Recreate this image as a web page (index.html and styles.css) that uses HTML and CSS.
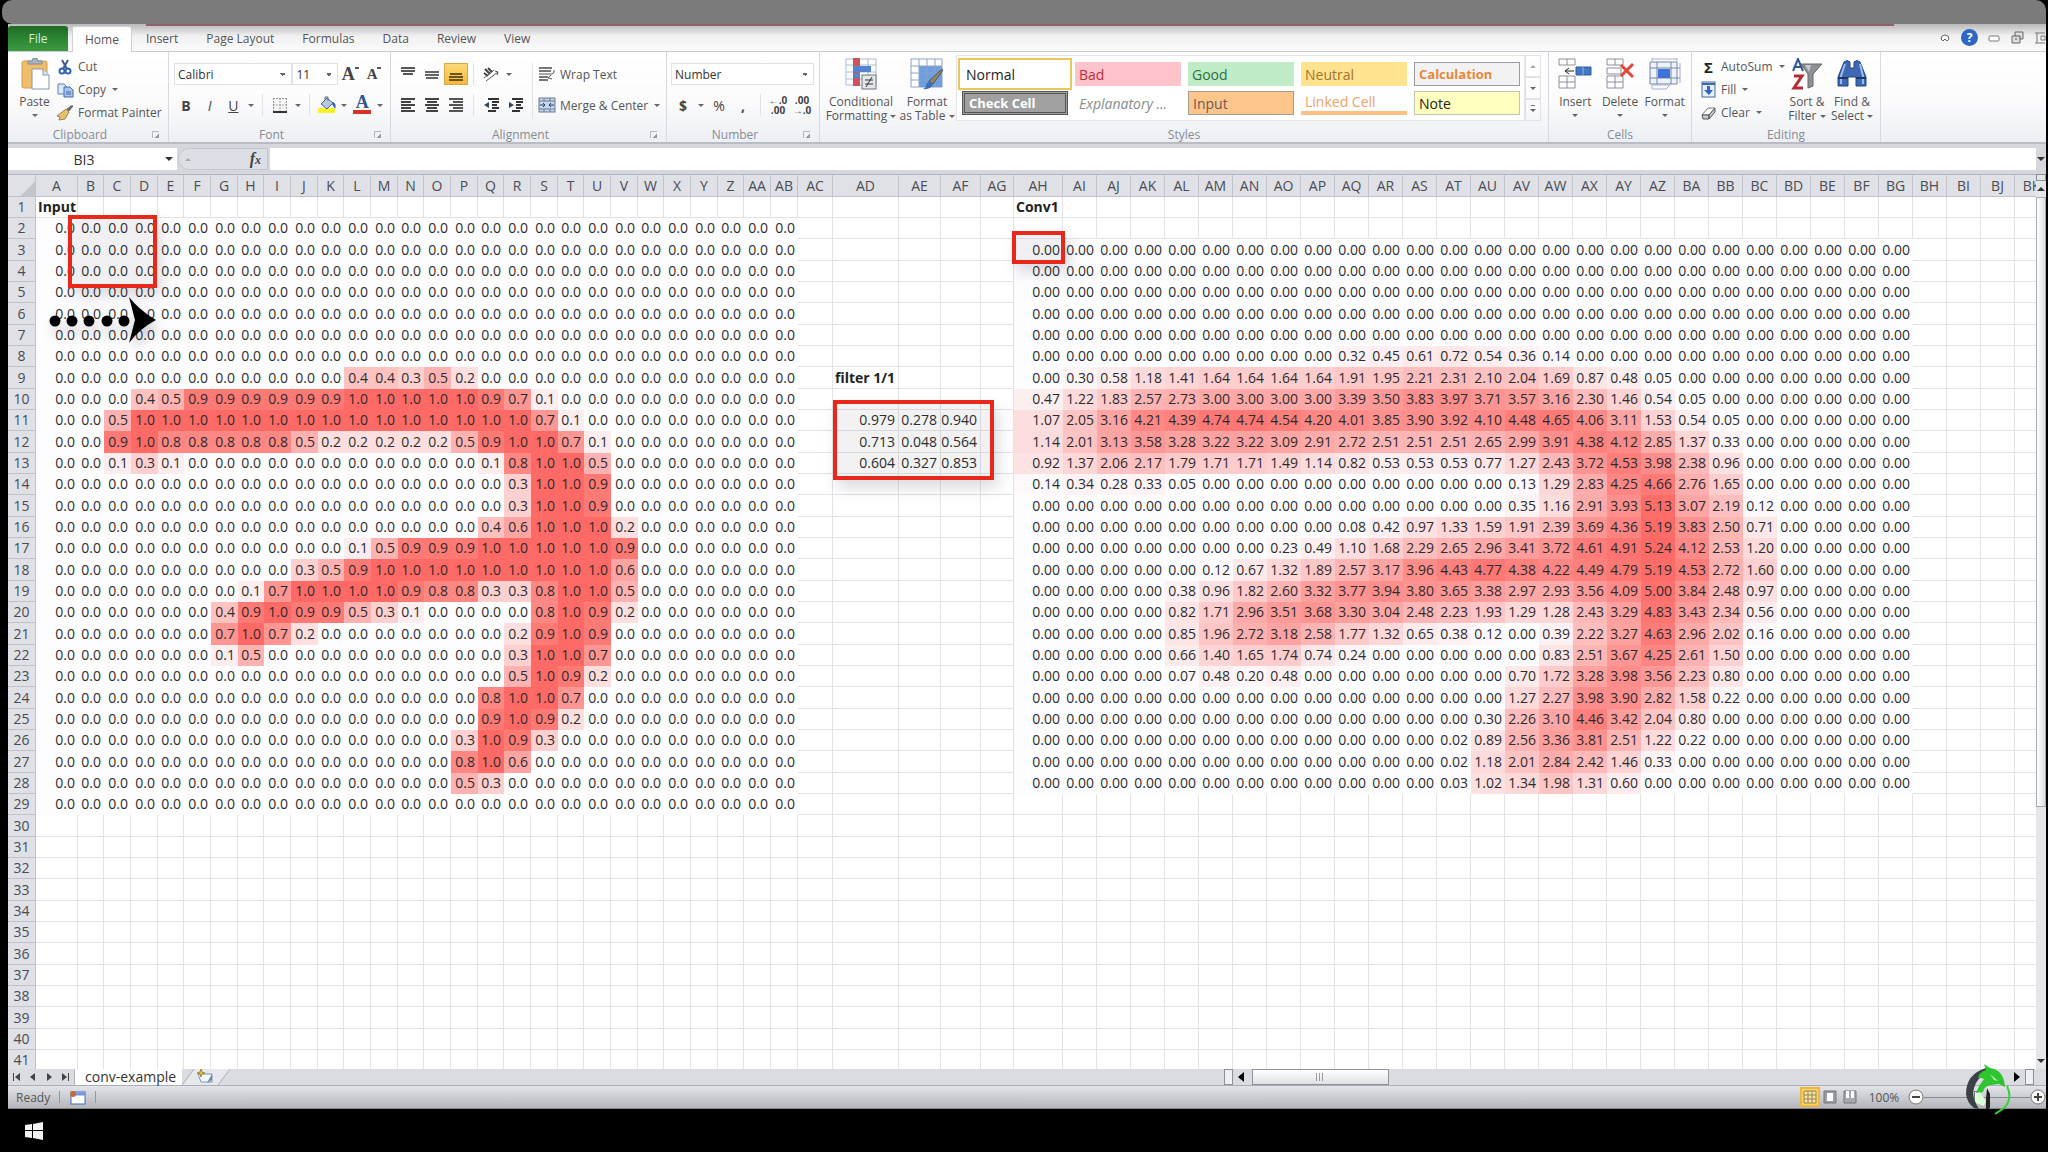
FILE: index.html
```html
<!DOCTYPE html>
<html lang="en">

<head>
    <meta charset="UTF-8">
    <meta name="viewport" content="width=device-width, initial-scale=1.0">
    <title>conv-example</title>
    <link rel="stylesheet" href="styles.css">
</head>

<body>

    <div class="title-bar"></div>

    <main class="window">

        <!-- Ribbon tabs -->
        <nav class="tabs">
            <button class="file-tab">File</button>
            <a href="#" class="tab active">Home</a>
            <a href="#" class="tab">Insert</a>
            <a href="#" class="tab">Page Layout</a>
            <a href="#" class="tab">Formulas</a>
            <a href="#" class="tab">Data</a>
            <a href="#" class="tab">Review</a>
            <a href="#" class="tab">View</a>
            <div class="window-buttons">
                <button aria-label="Minimize ribbon"><svg width="12" height="12" viewBox="0 0 12 12"><path d="M2 7a4 4 0 0 1 8 0L8 9 6 7 4 9z" fill="#fff" stroke="#666"/></svg></button>
                <button class="help" aria-label="Help">?</button>
                <button aria-label="Minimize"><svg width="12" height="12" viewBox="0 0 12 12"><rect x="1" y="4" width="10" height="5" rx="1" fill="#fff" stroke="#777"/></svg></button>
                <button aria-label="Restore"><svg width="14" height="14" viewBox="0 0 14 14"><path d="M5 1h8v7h-3v4H2V5h3z" fill="#ddd" stroke="#666"/><path d="M5 5h5v3M5 8h2" fill="none" stroke="#555"/></svg></button>
                <button aria-label="Close"><svg width="12" height="12" viewBox="0 0 12 12"><path d="M1 1h10M1 11h10M3 1v10M7 4h4v4H7z" fill="none" stroke="#777"/></svg></button>
            </div>
        </nav>

        <!-- Ribbon -->
        <section class="ribbon">
            <div class="group clipboard">
                <div class="tools">
                    <button class="big paste">
                        <svg width="32" height="32" viewBox="0 0 32 32"><rect x="3" y="3" width="25" height="27" rx="2" fill="#efbe6c" stroke="#d29b45"/><path d="M9 6V3h4a3 3 0 0 1 6 0h4v3z" fill="#aab4be" stroke="#7e8a96"/><path d="M13 11h11l6 6v14H13z" fill="#fff" stroke="#8a97a8"/><path d="M24 11v6h6" fill="#dde6f0" stroke="#8a97a8"/></svg>
                        <span>Paste</span><i class="caret"></i>
                    </button>
                    <div class="stack">
                        <button class="small"><svg width="17" height="16" viewBox="0 0 17 16"><path d="M5 1l5 9M11 1L6 10" stroke="#445a80" stroke-width="2" fill="none"/><circle cx="5" cy="12" r="2.5" fill="none" stroke="#3465b0" stroke-width="2"/><circle cx="11" cy="12" r="2.5" fill="none" stroke="#3465b0" stroke-width="2"/></svg>Cut</button>
                        <button class="small"><svg width="17" height="16" viewBox="0 0 17 16"><path d="M1 2h6l3 3v7H1z" fill="#dbe8f8" stroke="#5b7fb5"/><path d="M7 5h6l3 3v7H7z" fill="#a9c5ec" stroke="#3e69ab"/><path d="M9 10h5M9 12h5" stroke="#3e69ab"/></svg>Copy<i class="caret"></i></button>
                        <button class="small"><svg width="17" height="16" viewBox="0 0 17 16"><path d="M16 1l-5 6-2-2 5-4z" fill="#777" stroke="#555"/><path d="M9 4l3 3-4 7-6 1 1-3-3-1z" fill="#e5c174" stroke="#a5833c"/></svg>Format Painter</button>
                    </div>
                </div>
                <div class="group-label"><span>Clipboard</span><i class="launcher"></i></div>
            </div>

            <div class="group font">
                <div class="tools rows">
                    <div class="row">
                        <select class="font-name" aria-label="Font"><option>Calibri</option></select>
                        <select class="font-size" aria-label="Font size"><option>11</option></select>
                        <button class="tool grow-font" aria-label="Grow font">A<sup></sup></button>
                        <button class="tool shrink-font" aria-label="Shrink font">A<sup></sup></button>
                    </div>
                    <div class="row">
                        <button class="tool"><b>B</b></button>
                        <button class="tool"><em>I</em></button>
                        <button class="tool"><u>U</u></button>
                        <button class="drop" aria-label="Underline style"><i class="caret"></i></button>
                        <i class="sep"></i>
                        <button class="tool" aria-label="Borders"><svg width="16" height="16" viewBox="0 0 16 16"><path d="M1.5 1v13M14.500 1v13M8 1v13M1 1.500h14M1 8h14" fill="none" stroke="#999" stroke-dasharray="2 1"/><path d="M1 15h14" stroke="#333" stroke-width="2"/></svg></button>
                        <button class="drop" aria-label="Border style"><i class="caret"></i></button>
                        <i class="sep"></i>
                        <button class="tool" aria-label="Fill color"><svg width="20" height="18" viewBox="0 0 20 18"><rect x="1" y="12" width="17" height="5" fill="#f8f32c"/><path d="M4 8l6-6 6 5-6 6z" fill="#b9c7de" stroke="#4b648d"/><path d="M8 4V1h3v4" fill="none" stroke="#58688a"/><path d="M16 6q4 2 2 7l-3-5z" fill="#2f62b8"/></svg></button>
                        <button class="drop" aria-label="Fill colors"><i class="caret"></i></button>
                        <button class="tool font-color" aria-label="Font color">A</button>
                        <button class="drop" aria-label="Font colors"><i class="caret"></i></button>
                    </div>
                </div>
                <div class="group-label"><span>Font</span><i class="launcher"></i></div>
            </div>

            <div class="group alignment">
                <div class="tools">
                    <div class="rows">
                        <div class="row">
                            <button class="tool" aria-label="Top align"><svg width="16" height="16" viewBox="0 0 16 16"><path d="M1 2h14M1 5h14M3 8h10" stroke="#555" stroke-width="2"/></svg></button>
                            <button class="tool" aria-label="Middle align"><svg width="16" height="16" viewBox="0 0 16 16"><path d="M1 6h14M1 9h14M2 12h12" stroke="#666" stroke-width="2"/></svg></button>
                            <button class="tool pressed" aria-label="Bottom align"><svg width="16" height="16" viewBox="0 0 16 16"><path d="M2 8h12M1 11h14M1 14h14" stroke="#6b5318" stroke-width="2"/></svg></button>
                            <i class="sep"></i>
                            <button class="tool" aria-label="Orientation"><svg width="16" height="16" viewBox="0 0 16 16"><path d="M1 12L11 4M3 15L15 6M12 5l3 1-1 3" fill="none" stroke="#555"/><path d="M2 3l5 5M1 7l4 3M5 2l4 4" stroke="#444" stroke-width="2"/></svg></button>
                            <button class="drop" aria-label="Orientation options"><i class="caret"></i></button>
                        </div>
                        <div class="row">
                            <button class="tool" aria-label="Align left"><svg width="16" height="16" viewBox="0 0 16 16"><path d="M1 2h14M1 5h10M1 8h14M1 11h10M1 14h14" stroke="#444" stroke-width="2"/></svg></button>
                            <button class="tool" aria-label="Center"><svg width="16" height="16" viewBox="0 0 16 16"><path d="M1 2h14M3 5h10M1 8h14M3 11h10M2 14h12" stroke="#444" stroke-width="2"/></svg></button>
                            <button class="tool" aria-label="Align right"><svg width="16" height="16" viewBox="0 0 16 16"><path d="M1 2h14M5 5h10M1 8h14M5 11h10M1 14h14" stroke="#555" stroke-width="2"/></svg></button>
                            <i class="sep"></i>
                            <button class="tool" aria-label="Decrease indent"><svg width="17" height="16" viewBox="0 0 17 16"><path d="M5 2h11M9 5h7M9 8h5M9 11h7M5 14h8" stroke="#333" stroke-width="2"/><path d="M6 5v6L1 8z" fill="#345"/></svg></button>
                            <button class="tool" aria-label="Increase indent"><svg width="17" height="16" viewBox="0 0 17 16"><path d="M5 2h11M9 5h7M9 8h5M9 11h7M5 14h8" stroke="#333" stroke-width="2"/><path d="M2 5v6l5-3z" fill="#345"/></svg></button>
                        </div>
                    </div>
                    <i class="sep tall"></i>
                    <div class="rows">
                        <button class="small"><svg width="18" height="16" viewBox="0 0 18 16"><path d="M1 2h13M1 5h12M1 11h9M1 14h9" stroke="#777" stroke-width="2"/><path d="M1 8h13q3-1 2-4M13 9l-3 3 4 1" fill="none" stroke="#555"/></svg>Wrap Text</button>
                        <button class="small"><svg width="18" height="16" viewBox="0 0 18 16"><rect x="1" y="1" width="16" height="14" fill="#c7d5ea" stroke="#6c7b94"/><path d="M1 4h16M1 12h16M6 1v3M12 1v3M6 12v3M12 12v3" stroke="#6c7b94"/><path d="M2 8h4M16 8h-4M5 6l2 2-2 2M13 6l-2 2 2 2" fill="none" stroke="#23406f"/></svg>Merge &amp; Center<i class="caret"></i></button>
                    </div>
                </div>
                <div class="group-label"><span>Alignment</span><i class="launcher"></i></div>
            </div>

            <div class="group number">
                <div class="tools rows">
                    <div class="row"><select class="number-format" aria-label="Number format"><option>Number</option></select></div>
                    <div class="row">
                        <button class="tool"><b>$</b></button>
                        <button class="drop" aria-label="Currencies"><i class="caret"></i></button>
                        <button class="tool">%</button>
                        <button class="tool"><b>,</b></button>
                        <i class="sep"></i>
                        <button class="tool decimals">←.0<br>.00</button>
                        <button class="tool decimals">.00<br>→.0</button>
                    </div>
                </div>
                <div class="group-label"><span>Number</span><i class="launcher"></i></div>
            </div>

            <div class="group styles">
                <div class="tools">
                    <button class="big cond">
                        <svg width="32" height="32" viewBox="0 0 32 32"><path d="M1 1h30v26H1z" fill="#fff" stroke="#a9bbd2"/><path d="M1 7h30M1 14h30M1 21h30M23 1v26" stroke="#a9bbd2"/><path d="M8 0h7v28H8z" fill="#d2525c"/><path d="M8 8h18v6H8z" fill="#5284cf"/><path d="M8 15h7v5H8z" fill="#5284cf"/><rect x="17" y="17" width="14" height="14" fill="#e3e6ea" stroke="#6c7480"/><path d="M20 22h8M20 26h8M27 19l-6 10" stroke="#333"/></svg>
                        <span>Conditional<br>Formatting <i class="caret"></i></span>
                    </button>
                    <button class="big table">
                        <svg width="34" height="32" viewBox="0 0 34 32"><path d="M1 1h31v28H1z" fill="#fff" stroke="#8da3c2"/><path d="M9 8h23v21H9z" fill="#6f9ee0"/><path d="M1 8h31M1 15h31M1 22h31M9 1v28M17 1v28M25 1v28" stroke="#8da3c2"/><path d="M33 12L23 26l-4-3 12-11z" fill="#8a8a6a" stroke="#555"/><path d="M19 23l4 3q-2 6-10 5 4-2 3-5z" fill="#3e6ec0"/></svg>
                        <span>Format<br>as Table <i class="caret"></i></span>
                    </button>
                    <div class="gallery">
                        <button class="style normal">Normal</button>
                        <button class="style bad">Bad</button>
                        <button class="style good">Good</button>
                        <button class="style neutral">Neutral</button>
                        <button class="style calculation">Calculation</button>
                        <button class="style check-cell">Check Cell</button>
                        <button class="style explanatory">Explanatory ...</button>
                        <button class="style input-style">Input</button>
                        <button class="style linked">Linked Cell</button>
                        <button class="style note">Note</button>
                    </div>
                    <div class="gallery-scroll">
                        <button aria-label="Scroll up"><i class="caret up"></i></button>
                        <button aria-label="Scroll down"><i class="caret"></i></button>
                        <button aria-label="More styles"><i class="caret more"></i></button>
                    </div>
                </div>
                <div class="group-label plain"><span>Styles</span></div>
            </div>

            <div class="group cells">
                <div class="tools">
                    <button class="big">
                        <svg width="34" height="32" viewBox="0 0 34 32"><path d="M1 1h16v6H1zM1 18h16v12H1zM9 1v6M9 18v12M1 24h16" fill="#fff" stroke="#8a8f98"/><path d="M18 9h15v8H18z" fill="#4377c4" stroke="#2f5a9c"/><path d="M25 9v8" stroke="#8db2ea"/><path d="M16 13H8M11 10l-4 3 4 3" fill="none" stroke="#222"/></svg>
                        <span>Insert</span><i class="caret"></i>
                    </button>
                    <button class="big">
                        <svg width="34" height="32" viewBox="0 0 34 32"><path d="M4 1h16v6H4zM4 10h14v6H4zM4 18h16v12H4zM12 1v6M12 18v12M4 24h16" fill="#fff" stroke="#8a8f98"/><path d="M18 7l12 12M30 6L18 18" stroke="#e0483c" stroke-width="3"/></svg>
                        <span>Delete</span><i class="caret"></i>
                    </button>
                    <button class="big">
                        <svg width="34" height="32" viewBox="0 0 34 32"><path d="M2 4h27v22H2z" fill="#eef3fb" stroke="#7486a3"/><path d="M2 10h30M2 20h30M9 4v22M23 4v22" stroke="#7486a3"/><path d="M10 11h12v9H10z" fill="#3f72d8"/><path d="M4 1h25M4 0v3M29 0v3M32 5v20M10 27h12l-4 4H4v-4z" fill="none" stroke="#9eb2d2"/></svg>
                        <span>Format</span><i class="caret"></i>
                    </button>
                </div>
                <div class="group-label plain"><span>Cells</span></div>
            </div>

            <div class="group editing">
                <div class="tools">
                    <div class="stack">
                        <button class="small"><b class="sigma">Σ</b>AutoSum<i class="caret"></i></button>
                        <button class="small"><svg width="17" height="17" viewBox="0 0 17 17"><rect x="2" y="1" width="13" height="15" fill="#e6effc" stroke="#4268a5"/><path d="M2 3h13" stroke="#4268a5" stroke-width="2"/><path d="M7 5h3v4h3l-4 5-5-5h3z" fill="#2f68c6"/></svg>Fill<i class="caret"></i></button>
                        <button class="small"><svg width="17" height="16" viewBox="0 0 17 16"><path d="M2 10l6-7h7l-6 7z" fill="#fff" stroke="#777"/><path d="M2 10h7v4H3zM9 10l6-7v4l-6 7z" fill="#c8ccd2" stroke="#555"/></svg>Clear<i class="caret"></i></button>
                    </div>
                    <button class="big">
                        <svg width="32" height="32" viewBox="0 0 32 32"><path d="M2 13L7 1l5 12M4 9h6" fill="none" stroke="#2f5597" stroke-width="2"/><path d="M3 18h8L3 30h9" fill="none" stroke="#b22a35" stroke-width="3"/><path d="M10 6h21l-9 10v12l-5 2V16z" fill="#8d9095" stroke="#666"/><path d="M14 7h6l-2 7z" fill="#c8cacd"/></svg>
                        <span>Sort &amp;<br>Filter <i class="caret"></i></span>
                    </button>
                    <button class="big">
                        <svg width="32" height="32" viewBox="0 0 32 32"><path d="M8 4q3-3 6 0v6h4V4q3-3 6 0l6 15v9h-10v-9h-8v9H2v-9z" fill="#3c68b4" stroke="#274678"/><path d="M9 6L5 18v8M24 6l3 12v8" fill="none" stroke="#9dbcf0" stroke-width="2"/><path d="M2 20h10M20 20h10" stroke="#1d3762" stroke-width="2"/></svg>
                        <span>Find &amp;<br>Select <i class="caret"></i></span>
                    </button>
                </div>
                <div class="group-label plain"><span>Editing</span></div>
            </div>
        </section>

        <!-- Formula bar -->
        <div class="formula-bar">
            <input class="name-box" type="text" value="BI3" aria-label="Name box">
            <button class="name-drop" aria-label="Names"><i class="caret dark"></i></button>
            <button class="fx" aria-label="Insert function"><i class="caret up"></i><em>f<sub>x</sub></em></button>
            <input class="formula" type="text" aria-label="Formula">
            <button class="expand" aria-label="Expand formula bar"><i class="caret dark"></i></button>
        </div>

        <!-- Sheet -->
        <section class="sheet">
            <div class="grid-pane">
                <table class="grid" id="grid"></table>
                <div class="marker input-window"></div>
                <div class="marker filter-window"></div>
                <div class="marker output-window"></div>
                <svg class="slide-arrow" width="112" height="48" viewBox="0 0 112 48">
                    <g fill="#000"><circle cx="7" cy="25" r="5.500"/><circle cx="24" cy="25" r="5.500"/><circle cx="41" cy="25" r="5.500"/><circle cx="59" cy="25" r="5.500"/><circle cx="76" cy="25" r="5.500"/><path d="M81 1q10 13 27 23-17 9-27 23l6-23z"/></g>
                </svg>
            </div>
            <div class="v-scroll">
                <i class="split"></i>
                <button aria-label="Scroll up"><i class="caret up dark"></i></button>
                <i class="v-thumb"></i>
                <button aria-label="Scroll down"><i class="caret dark"></i></button>
            </div>
        </section>

        <!-- Sheet tabs and horizontal scroll -->
        <div class="sheet-bar">
            <div class="sheet-nav">
                <button aria-label="First sheet"><svg width="9" height="8" viewBox="0 0 9 8"><path d="M1 0h1v8H1zM8 0v8L3 4z" fill="#444"/></svg></button>
                <button aria-label="Previous sheet"><svg width="9" height="8" viewBox="0 0 9 8"><path d="M7 0v8L2 4z" fill="#444"/></svg></button>
                <button aria-label="Next sheet"><svg width="9" height="8" viewBox="0 0 9 8"><path d="M2 0v8l5-4z" fill="#444"/></svg></button>
                <button aria-label="Last sheet"><svg width="9" height="8" viewBox="0 0 9 8"><path d="M1 0v8l5-4zM7 0h1v8H7z" fill="#444"/></svg></button>
            </div>
            <a href="#" class="sheet-tab">conv-example</a>
            <button class="new-sheet" aria-label="Insert worksheet"><svg width="48" height="16" viewBox="0 0 48 16"><path d="M0 16L12 0h36L36 16z" fill="#e6e8ec"/><path d="M0 16L12 0M36 16L48 0" stroke="#a9adb5"/><path d="M16 5h14v8H19z" fill="#f4f7fb" stroke="#7f93b5"/><path d="M30 5v6l-5 3z" fill="#6c83b0"/><path d="M19 0l1 3 3 1-3 1-1 3-1-3-3-1 3-1z" fill="#e5c33c" stroke="#a08a3a"/></svg></button>
            <div class="h-scroll">
                <i class="split"></i>
                <button aria-label="Scroll left"><svg width="6" height="10" viewBox="0 0 6 10"><path d="M6 0v10L0 5z"/></svg></button>
                <i class="h-thumb"></i>
                <button class="scroll-right" aria-label="Scroll right"><svg width="6" height="10" viewBox="0 0 6 10"><path d="M0 0v10l6-5z"/></svg></button>
                <i class="split"></i>
            </div>
        </div>

        <footer class="status-bar">
            <span class="ready">Ready</span>
            <i class="status-sep"></i>
            <svg width="17" height="15" viewBox="0 0 17 15"><rect x="2" y="2" width="14" height="12" fill="#fff" stroke="#3f6cb5"/><path d="M2 4h14" stroke="#6f98d8" stroke-width="3"/><circle cx="4" cy="4" r="3" fill="#c96a3a"/></svg>
            <i class="status-sep"></i>
            <div class="views">
                <button class="view on" aria-label="Normal view"><svg width="14" height="14" viewBox="0 0 14 14"><path d="M1 1h12v12H1zM5 1v12M9 1v12M1 5h12M1 9h12" fill="#f5e3a8" stroke="#9a8550"/></svg></button>
                <button class="view" aria-label="Page layout view"><svg width="14" height="14" viewBox="0 0 14 14"><path d="M1 1h12v12H1z" fill="#9a9da5" stroke="#777"/><path d="M4 3h6v8H4z" fill="#fff"/></svg></button>
                <button class="view" aria-label="Page break view"><svg width="14" height="14" viewBox="0 0 14 14"><path d="M1 1h12v12H1z" fill="#a5a8b0" stroke="#777"/><path d="M3 1h3v7H3zM8 1h3v7H8z" fill="#fff"/></svg></button>
                <span class="zoom-value">100%</span>
                <button class="round" aria-label="Zoom out"><svg width="16" height="16" viewBox="0 0 16 16"><circle cx="8" cy="8" r="7" fill="#fff" stroke="#777"/><path d="M4 8h8" stroke="#444" stroke-width="2"/></svg></button>
                <input class="zoom" type="range" min="0" max="200" value="100" aria-label="Zoom">
                <button class="round" aria-label="Zoom in"><svg width="16" height="16" viewBox="0 0 16 16"><circle cx="8" cy="8" r="7" fill="#fff" stroke="#777"/><path d="M4 8h8M8 4v8" stroke="#444" stroke-width="2"/></svg></button>
            </div>
            <svg class="badge" width="50" height="54" viewBox="0 0 50 54">
                <path d="M22 6Q2 12 2 32q1 9 8 14l5 1q-8-12-5-21 3-11 14-15z" fill="#3b4144"/>
                <path d="M20 2l6 4q14 2 15 19l-6-3-8 1q-7 1-8 7l-7 1q3-8 8-14-4-2-6-1 1-6 8-8z" fill="#2fc52f"/>
                <path d="M26 12l8 7-4-1z" fill="#b9f5b2"/>
                <path d="M11 33l5-3 6 9-2 5-8-3z" fill="#d8ffd8"/>
                <path d="M23 26l3 6v14l-4 2V37z" fill="#222"/>
                <path d="M43 24q6 13-3 22l-9 6" fill="none" stroke="#37d23a" stroke-width="2"/>
            </svg>
        </footer>
    </main>

    <div class="taskbar">
        <button class="start" aria-label="Start"><svg width="18" height="18" viewBox="0 0 18 18"><path d="M0 3l7-1v6H0zM8 2l10-2v8H8zM0 9h7v7l-7-1zM8 9h10v9L8 16z" fill="#f4f4f4"/></svg></button>
    </div>

    <script src="script.js"></script>
</body>

</html>
```
FILE: styles.css
```css
* {
    box-sizing: border-box;
}

body {
    margin: 0;
    height: 100vh;
    display: flex;
    flex-direction: column;
    overflow: hidden;
    background-color: #000;
    color: #555;
    font-family: 'Open Sans', 'Noto Sans', sans-serif;
    font-size: 12px;
}

button {
    display: flex;
    align-items: center;
    justify-content: center;
    padding: 0;
    border: 0;
    background: none;
    color: inherit;
    font: inherit;
}

input,
select {
    font: inherit;
    color: #333;
    border: 0;
    padding: 0;
    background-color: #fff;
}

svg {
    display: block;
    flex: none;
}

.title-bar {
    flex: none;
    height: 24px;
    margin: 0 2px;
    background-color: #7b7b7b;
    border-radius: 10px 10px 0 10px;
}

.window {
    flex: 1;
    min-height: 0;
    display: flex;
    flex-direction: column;
    margin: 0 2px 0 8px;
    background-color: #d5d7dc;
}

/* Small drop-down triangle */
.caret {
    display: inline-block;
    flex: none;
    width: 0;
    height: 0;
    border: 3px solid transparent;
    border-top-color: #666;
    border-bottom: 0;
    vertical-align: middle;
}

.caret.up {
    border-top: 0;
    border-bottom: 3px solid #aaa;
}

.caret.dark {
    border-width: 4px;
    border-bottom-width: 0;
    border-top-color: #333;
}

.caret.up.dark {
    border-width: 0 4px 4px;
    border-bottom-color: #333;
}

.caret.more {
    box-shadow: 0 -5px 0 -1px #777;
}

/* Tabs */
.tabs {
    flex: none;
    height: 28px;
    display: flex;
    align-items: flex-end;
    background:
        linear-gradient(#91606c, #91606c) 138px 0 / calc(100% - 290px) 2px no-repeat,
        linear-gradient(#b9b9b9, #f1f1f1 45%, #fafafb);
    border-bottom: 1px solid #c9cbd0;
}

.file-tab {
    width: 60px;
    height: 25px;
    margin-right: 4px;
    background: linear-gradient(#1d6b22, #2f8a36 60%, #3c9a40);
    color: #d9f0da;
    border-radius: 3px 3px 0 0;
}

.tab {
    height: 25px;
    padding: 0 14px;
    line-height: 25px;
    color: #555;
    text-decoration: none;
    white-space: nowrap;
}

.tab.active {
    height: 26px;
    margin-bottom: -1px;
    padding: 0 12px;
    background-color: #fff;
    border: 1px solid #cdd0d6;
    border-bottom: 0;
    border-radius: 3px 3px 0 0;
}

.window-buttons {
    display: flex;
    align-items: center;
    align-self: center;
    gap: 10px;
    margin-left: auto;
}

.help {
    width: 17px;
    height: 17px;
    border-radius: 50%;
    background-color: #2f66c4;
    color: #fff;
    font-weight: bold;
}

/* Ribbon */
.ribbon {
    flex: none;
    display: flex;
    height: 92px;
    background: linear-gradient(#fff, #fbfbfc 55%, #eceff4);
    border-bottom: 2px solid #b9bcc3;
}

.group {
    display: flex;
    flex-direction: column;
    border-right: 1px solid #d6d9df;
}

.clipboard {
    width: 161px;
}

.font {
    width: 222px;
}

.alignment {
    width: 276px;
}

.number {
    width: 153px;
}

.styles {
    width: 729px;
}

.cells {
    width: 143px;
}

.editing {
    width: 189px;
}

.tools {
    flex: 1;
    display: flex;
    padding: 3px 4px 0;
}

.editing .tools {
    padding-left: 8px;
}

.rows {
    display: flex;
    flex-direction: column;
    gap: 9px;
    padding-top: 11px;
}

.font .rows,
.alignment .tools {
    padding-left: 5px;
}

.alignment .rows {
    padding-top: 8px;
}

.row {
    display: flex;
    height: 22px;
}

.stack {
    display: flex;
    flex-direction: column;
}

.stack .small {
    height: 23px;
}

.small {
    height: 22px;
    justify-content: flex-start;
    gap: 4px;
    white-space: nowrap;
}

.small .caret {
    margin-left: 2px;
}

.big {
    width: 45px;
    flex-direction: column;
    justify-content: flex-start;
    gap: 5px;
    padding-top: 3px;
    line-height: 14px;
    white-space: nowrap;
}

.big.cond {
    width: 74px;
}

.big.table {
    width: 58px;
}

.tool {
    width: 24px;
    font-size: 14px;
    color: #444;
}

.drop {
    width: 12px;
}

.pressed {
    background: linear-gradient(#fbd978, #f6b93a);
    border: 1px solid #d9a744;
}

.sep {
    width: 1px;
    margin: 0 5px;
    background-color: #e0e2e6;
}

.sep.tall {
    height: 56px;
    margin-top: 8px;
}

.grow-font,
.shrink-font,
.font-color {
    font-family: 'Liberation Serif', serif;
    font-weight: bold;
    font-size: 18px;
}

.shrink-font {
    font-size: 15px;
}

.grow-font sup,
.shrink-font sup {
    width: 4px;
    height: 2px;
    margin-bottom: 12px;
    background-color: #555;
}

.font-color {
    width: 18px;
    height: 20px;
    margin: 0 3px;
    line-height: 18px;
    color: #34558c;
    border-bottom: 4px solid #d93227;
}

.tool.decimals {
    display: block;
    font-size: 10px;
    line-height: 10px;
    font-weight: bold;
}

.sigma {
    width: 17px;
    font-size: 15px;
    color: #222;
}

select {
    appearance: none;
    height: 22px;
    padding-left: 3px;
    border: 1px solid #dfe1e6;
    background-image: linear-gradient(45deg, transparent 50%, #666 50%), linear-gradient(-45deg, transparent 50%, #666 50%);
    background-position: right 8px top 9px, right 5px top 9px;
    background-size: 3px 3px;
    background-repeat: no-repeat;
}

.font-name {
    width: 119px;
}

.font-size {
    width: 46px;
}

.number-format {
    width: 143px;
}

.group-label {
    display: grid;
    grid-template-columns: 1fr 16px;
    align-items: center;
    height: 16px;
    color: #888b92;
    text-align: center;
}

.group-label.plain {
    grid-template-columns: 1fr;
}

.launcher {
    width: 7px;
    height: 7px;
    border: 1px solid #b4b7bd;
    border-width: 1px 0 0 1px;
    background: linear-gradient(135deg, transparent 60%, #999 60%);
}

/* Cell style gallery */
.gallery {
    display: grid;
    grid-template-columns: repeat(5, 106px);
    grid-auto-rows: 24px;
    gap: 5px 7px;
    height: 66px;
    padding: 6px 4px 0 5px;
    background-color: #fff;
    border: 1px solid #e3e5e9;
}

.style {
    justify-content: flex-start;
    padding-left: 4px;
    font-size: 14px;
    white-space: nowrap;
}

.normal {
    color: #222;
    box-shadow: 0 0 0 2px #fff, 0 0 0 4px #e8c75c;
}

.bad {
    background-color: #ffc3cb;
    color: #b5303c;
}

.good {
    background-color: #bfecc7;
    color: #2c7040;
}

.neutral {
    background-color: #ffe38f;
    color: #a5742a;
}

.calculation {
    background-color: #f2f2f2;
    border: 1px solid #999ca6;
    color: #e8873c;
    font-size: 13px;
    font-weight: bold;
}

.check-cell {
    background-color: #a0a0a0;
    border: 3px double #555;
    color: #fff;
    font-size: 13px;
    font-weight: bold;
}

.explanatory {
    color: #8b8b8b;
    font-style: italic;
}

.input-style {
    background-color: #ffc68c;
    border: 1px solid #a39a90;
    color: #6a5a58;
}

.linked {
    border-bottom: 4px solid #fdbf84;
    color: #eda268;
}

.note {
    background-color: #ffffbf;
    border: 1px solid #c4c4b4;
    color: #222;
}

.gallery-scroll {
    display: grid;
    grid-template-rows: repeat(3, 22px);
    width: 16px;
}

.gallery-scroll button {
    border: 1px solid #e0e2e7;
}

/* Formula bar */
.formula-bar {
    flex: none;
    display: flex;
    height: 30px;
    padding: 4px 0;
}

.name-box {
    width: 152px;
    text-align: center;
    font-size: 14px;
}

.name-drop {
    width: 17px;
    background-color: #fff;
}

.fx {
    width: 90px;
    justify-content: space-between;
    margin: 0 2px 0 1px;
    padding: 0 6px;
    background-color: #dcdfe6;
    border: 1px solid #c3c6ce;
    border-radius: 12px 0 0 12px;
    font-family: 'Liberation Serif', serif;
    font-size: 16px;
    font-weight: bold;
    line-height: 16px;
    color: #444;
}

.fx sub {
    font-size: 12px;
    line-height: 1;
    vertical-align: baseline;
}

.formula {
    flex: 1;
}

.expand {
    width: 10px;
}

/* Sheet */
.sheet {
    flex: 1;
    min-height: 0;
    display: flex;
}

.grid-pane {
    position: relative;
    flex: 1;
    min-width: 0;
    overflow: hidden;
    background-color: #fff;
}

.grid {
    width: 1px;
    table-layout: fixed;
    border-collapse: separate;
    border-spacing: 0;
    font-size: 14px;
    color: #2c2c2c;
}

.grid th,
.grid td {
    height: 21px;
    padding: 0 3px 0 0;
    border: 0 solid #e2e2e8;
    border-width: 0 1px 1px 0;
    line-height: 20px;
    text-align: right;
    white-space: nowrap;
}

.grid th {
    padding: 0;
    background-color: #dfe1e7;
    border-color: #bfc2ca;
    color: #4a4c52;
    font-weight: normal;
    text-align: center;
}

.grid thead th {
    height: 23px;
    border-top: 1px solid #aeb3bd;
}

.grid tbody tr:nth-child(3n) td {
    height: 22px;
}

.grid td.heat {
    border: 0;
    padding: 0 3px 1px 0;
}

.grid td.title {
    padding-left: 2px;
    font-weight: bold;
    color: #222;
    text-align: left;
}

.corner {
    background: linear-gradient(135deg, transparent 70%, #c3c6cd 70%);
}

.col-head {
    width: 28px;
}

.col-a {
    width: 42px;
}

.col-input {
    width: 27px;
}

.col-input:nth-child(3n) {
    width: 26px;
}

.col-ac {
    width: 35px;
}

.col-ad {
    width: 66px;
}

.col-ae {
    width: 42px;
}

.col-af {
    width: 40px;
}

.col-ag {
    width: 33px;
}

.col-ah {
    width: 49px;
}

.col-output {
    width: 34px;
}

/* Frames drawn over the cells */
.marker {
    position: absolute;
    border: 4px solid #e8281a;
    background-color: rgba(70, 70, 90, 0.07);
    box-shadow: 4px 8px 14px rgba(60, 60, 80, 0.18);
}

.input-window {
    left: 60px;
    top: 41px;
    width: 89px;
    height: 73px;
}

.filter-window {
    left: 825px;
    top: 226px;
    width: 161px;
    height: 80px;
}

.output-window {
    left: 1004px;
    top: 57px;
    width: 53px;
    height: 33px;
}

.slide-arrow {
    position: absolute;
    left: 40px;
    top: 122px;
    filter: drop-shadow(3px 8px 6px rgba(60, 60, 80, 0.25));
}

.v-scroll {
    width: 10px;
    display: flex;
    flex-direction: column;
    background-color: #e4e6ea;
}

.v-scroll .split {
    height: 7px;
    border: 1px solid #8d9097;
}

.v-scroll button {
    height: 16px;
}

.v-thumb {
    height: 610px;
    margin-bottom: auto;
    background: linear-gradient(90deg, #fff, #dcdfe4);
    border: 1px solid #a9acb4;
}

/* Bottom bars */
.sheet-bar {
    flex: none;
    display: flex;
    height: 17px;
    background-color: #dadce2;
    border-bottom: 1px solid #a9adb6;
}

.sheet-nav {
    display: flex;
    align-items: center;
    justify-content: space-around;
    width: 67px;
    border-right: 1px solid #b0b3ba;
}

.sheet-tab {
    padding: 0 6px 0 10px;
    background-color: #fff;
    color: #333;
    font-size: 14px;
    line-height: 16px;
    text-decoration: none;
}

.h-scroll {
    display: flex;
    align-items: center;
    gap: 5px;
    width: 822px;
    margin-left: auto;
    padding-right: 12px;
}

.h-scroll .split {
    width: 9px;
    height: 16px;
    background-color: #eef0f3;
    border: 1px solid #8d9097;
}

.h-thumb {
    width: 137px;
    height: 16px;
    margin-left: 3px;
    background: repeating-linear-gradient(90deg, #999 0 1px, transparent 1px 3px) center / 9px 8px no-repeat, linear-gradient(#fff, #dfe1e6);
    border: 1px solid #8f929a;
}

.scroll-right {
    margin-left: auto;
}

.status-bar {
    flex: none;
    position: relative;
    display: flex;
    align-items: center;
    gap: 9px;
    height: 23px;
    padding-left: 8px;
    background: linear-gradient(#e2e4ea, #b4b6bc);
    border-bottom: 1px solid #888;
}

.ready {
    width: 34px;
}

.status-sep {
    width: 1px;
    height: 12px;
    background-color: #95989f;
}

.views {
    display: flex;
    align-items: center;
    margin-left: auto;
}

.view {
    width: 20px;
    height: 20px;
}

.view.on {
    background-color: #fbd668;
    border: 2px solid #edb83c;
}

.zoom-value {
    width: 48px;
    text-align: center;
}

.zoom {
    appearance: none;
    width: 106px;
    height: 1px;
    margin: 0;
    background-color: #85888f;
}

.zoom::-webkit-slider-thumb {
    appearance: none;
    width: 7px;
    height: 12px;
    background-color: #eee;
    border: 1px solid #777;
}

.round {
    width: 16px;
}

.badge {
    position: absolute;
    right: 32px;
    bottom: -8px;
}

/* Taskbar */
.taskbar {
    flex: none;
    display: flex;
    align-items: center;
    height: 43px;
    padding-left: 25px;
}
```
FILE: script.js
```js
const LAST_ROW = 41;
const COLUMNS = 63; // A..BK

// Each run is [row, first column inside the block, values...]; everything else is zero
const inputRuns = [
    [9, 11, .4, .4, .3, .5, .2],
    [10, 3, .4, .5, .9, .9, .9, .9, .9, .9, 1, 1, 1, 1, 1, .9, .7, .1],
    [11, 2, .5, 1, 1, 1, 1, 1, 1, 1, 1, 1, 1, 1, 1, 1, 1, 1, .7, .1],
    [12, 2, .9, 1, .8, .8, .8, .8, .8, .5, .2, .2, .2, .2, .2, .5, .9, 1, 1, .7, .1],
    [13, 2, .1, .3, .1],
    [13, 16, .1, .8, 1, 1, .5],
    [14, 17, .3, 1, 1, .9],
    [15, 17, .3, 1, 1, .9],
    [16, 16, .4, .6, 1, 1, 1, .2],
    [17, 11, .1, .5, .9, .9, .9, 1, 1, 1, 1, 1, .9],
    [18, 9, .3, .5, .9, 1, 1, 1, 1, 1, 1, 1, 1, 1, .6],
    [19, 7, .1, .7, 1, 1, 1, 1, .9, .8, .8, .3, .3, .8, 1, 1, .5],
    [20, 6, .4, .9, 1, .9, .9, .5, .3, .1],
    [20, 18, .8, 1, .9, .2],
    [21, 6, .7, 1, .7, .2],
    [21, 17, .2, .9, 1, .9],
    [22, 6, .1, .5],
    [22, 17, .3, 1, 1, .7],
    [23, 17, .5, 1, .9, .2],
    [24, 16, .8, 1, 1, .7],
    [25, 16, .9, 1, .9, .2],
    [26, 15, .3, 1, .9, .3],
    [27, 15, .8, 1, .6],
    [28, 15, .5, .3]
];

const outputRuns = [
    [8, 9, .32, .45, .61, .72, .54, .36, .14],
    [9, 1, .30, .58, 1.18, 1.41, 1.64, 1.64, 1.64, 1.64, 1.91, 1.95, 2.21, 2.31, 2.10, 2.04, 1.69, .87, .48, .05],
    [10, 0, .47, 1.22, 1.83, 2.57, 2.73, 3, 3, 3, 3, 3.39, 3.50, 3.83, 3.97, 3.71, 3.57, 3.16, 2.30, 1.46, .54, .05],
    [11, 0, 1.07, 2.05, 3.16, 4.21, 4.39, 4.74, 4.74, 4.54, 4.20, 4.01, 3.85, 3.90, 3.92, 4.10, 4.48, 4.65, 4.06, 3.11, 1.53, .54, .05],
    [12, 0, 1.14, 2.01, 3.13, 3.58, 3.28, 3.22, 3.22, 3.09, 2.91, 2.72, 2.51, 2.51, 2.51, 2.65, 2.99, 3.91, 4.38, 4.12, 2.85, 1.37, .33],
    [13, 0, .92, 1.37, 2.06, 2.17, 1.79, 1.71, 1.71, 1.49, 1.14, .82, .53, .53, .53, .77, 1.27, 2.43, 3.72, 4.53, 3.98, 2.38, .96],
    [14, 0, .14, .34, .28, .33, .05],
    [14, 14, .13, 1.29, 2.83, 4.25, 4.66, 2.76, 1.65],
    [15, 14, .35, 1.16, 2.91, 3.93, 5.13, 3.07, 2.19, .12],
    [16, 9, .08, .42, .97, 1.33, 1.59, 1.91, 2.39, 3.69, 4.36, 5.19, 3.83, 2.50, .71],
    [17, 7, .23, .49, 1.10, 1.68, 2.29, 2.65, 2.96, 3.41, 3.72, 4.61, 4.91, 5.24, 4.12, 2.53, 1.20],
    [18, 5, .12, .67, 1.32, 1.89, 2.57, 3.17, 3.96, 4.43, 4.77, 4.38, 4.22, 4.49, 4.79, 5.19, 4.53, 2.72, 1.60],
    [19, 4, .38, .96, 1.82, 2.60, 3.32, 3.77, 3.94, 3.80, 3.65, 3.38, 2.97, 2.93, 3.56, 4.09, 5, 3.84, 2.48, .97],
    [20, 4, .82, 1.71, 2.96, 3.51, 3.68, 3.30, 3.04, 2.48, 2.23, 1.93, 1.29, 1.28, 2.43, 3.29, 4.83, 3.43, 2.34, .56],
    [21, 4, .85, 1.96, 2.72, 3.18, 2.58, 1.77, 1.32, .65, .38, .12, 0, .39, 2.22, 3.27, 4.63, 2.96, 2.02, .16],
    [22, 4, .66, 1.40, 1.65, 1.74, .74, .24],
    [22, 15, .83, 2.51, 3.67, 4.25, 2.61, 1.50],
    [23, 4, .07, .48, .20, .48],
    [23, 14, .70, 1.72, 3.28, 3.98, 3.56, 2.23, .80],
    [24, 14, 1.27, 2.27, 3.98, 3.90, 2.82, 1.58, .22],
    [25, 13, .30, 2.26, 3.10, 4.46, 3.42, 2.04, .80],
    [26, 12, .02, .89, 2.56, 3.36, 3.81, 2.51, 1.22, .22],
    [27, 12, .02, 1.18, 2.01, 2.84, 2.42, 1.46, .33],
    [28, 12, .03, 1.02, 1.34, 1.98, 1.31, .60]
];

const blocks = [
    { col: 0, width: 28, from: 2, to: 29, digits: 1, max: 1, runs: inputRuns },
    { col: 33, width: 26, from: 3, to: 28, digits: 2, max: 5.24, runs: outputRuns }
];

const filterRows = { 11: [.979, .278, .940], 12: [.713, .048, .564], 13: [.604, .327, .853] };
const titles = { '1-0': 'Input', '1-33': 'Conv1', '9-29': 'filter 1/1' };

function columnName(i) {
    const last = String.fromCharCode(65 + i % 26);
    return i < 26 ? last : String.fromCharCode(64 + Math.floor(i / 26)) + last;
}

function columnClass(i) {
    if (i === 0) return 'col-a';
    if (i < 28) return 'col-input';
    if (i < 34) return 'col-' + columnName(i).toLowerCase();
    return 'col-output';
}

// White to red colour scale
function heat(t) {
    const mix = (a, b) => Math.round(a + (b - a) * t);
    return `rgb(${mix(253, 255)}, ${mix(252, 106)}, ${mix(254, 102)})`;
}

function valueAt(block, row, offset) {
    for (const [r, start, ...values] of block.runs) {
        if (r === row && offset >= start && offset < start + values.length) {
            return values[offset - start];
        }
    }
    return 0;
}

function cell(row, col) {
    const title = titles[row + '-' + col];
    if (title) return `<td class="title">${title}</td>`;

    for (const block of blocks) {
        const offset = col - block.col;
        if (offset >= 0 && offset < block.width && row >= block.from && row <= block.to) {
            const value = valueAt(block, row, offset);
            return `<td class="heat" style="background-color: ${heat(value / block.max)}">${value.toFixed(block.digits)}</td>`;
        }
    }

    if (filterRows[row] && col >= 29 && col <= 31) {
        return `<td>${filterRows[row][col - 29].toFixed(3)}</td>`;
    }
    return '<td></td>';
}

let cols = '<col class="col-head">';
let head = '<th class="corner"></th>';
for (let c = 0; c < COLUMNS; c++) {
    cols += `<col class="${columnClass(c)}">`;
    head += `<th scope="col">${columnName(c)}</th>`;
}

let body = '';
for (let r = 1; r <= LAST_ROW; r++) {
    body += `<tr><th scope="row">${r}</th>`;
    for (let c = 0; c < COLUMNS; c++) body += cell(r, c);
    body += '</tr>';
}

document.getElementById('grid').innerHTML =
    `<colgroup>${cols}</colgroup><thead><tr>${head}</tr></thead><tbody>${body}</tbody>`;
```
